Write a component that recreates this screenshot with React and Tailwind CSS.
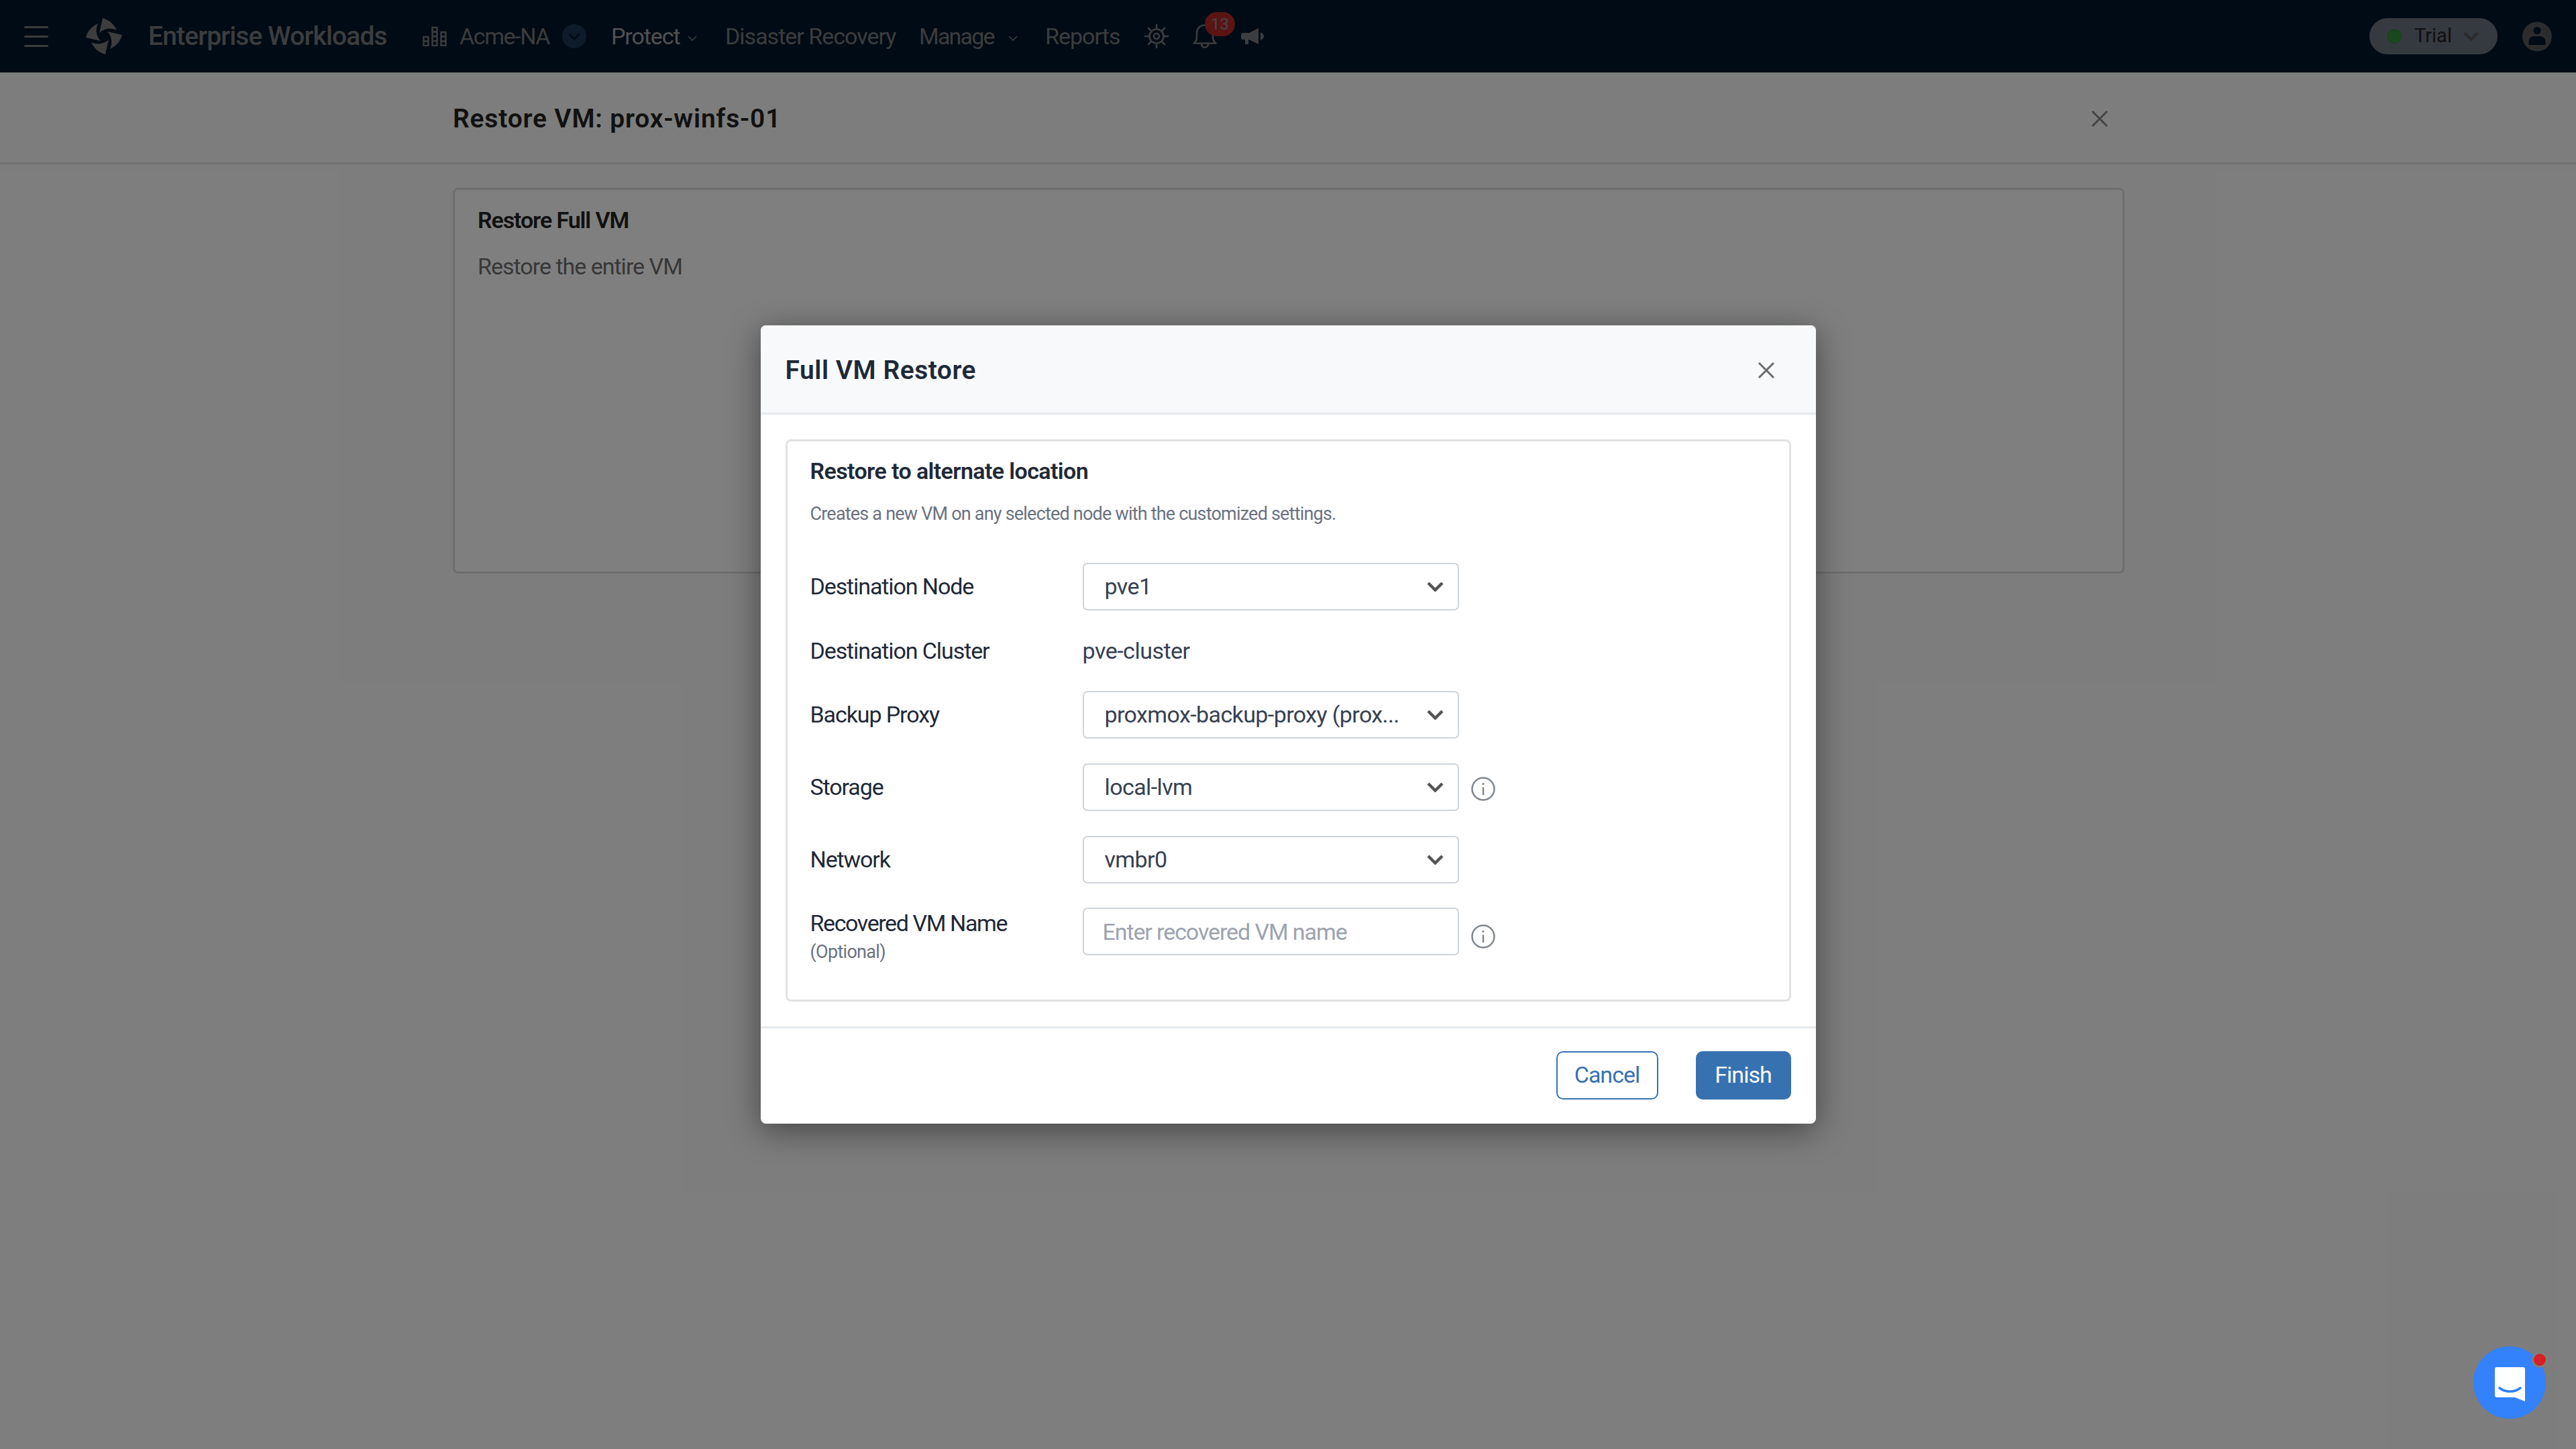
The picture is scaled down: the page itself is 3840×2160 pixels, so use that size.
import React from "react";

const font = "font-['Roboto','Liberation_Sans',sans-serif]";

function Caret({ className }) {
  return (
    <svg viewBox="0 0 25 15" className={className} fill="none" stroke="currentColor" strokeWidth="4.5">
      <path d="M2 2l10.5 10.5L23 2" />
    </svg>
  );
}

function SmallCaret({ className }) {
  return (
    <svg viewBox="0 0 14 8" className={className} fill="none" stroke="currentColor" strokeWidth="1.6">
      <path d="M1 1l6 6 6-6" />
    </svg>
  );
}

function Cross({ className }) {
  return (
    <svg viewBox="0 0 24 24" className={className} stroke="currentColor" strokeWidth="3">
      <path d="M1 1l22 22M23 1L1 23" />
    </svg>
  );
}

function Info({ className }) {
  return (
    <svg viewBox="0 0 36 36" className={`w-9 h-9 shrink-0 ml-[18px] text-[#7f878e] ${className}`} fill="none" stroke="currentColor" strokeWidth="2.5">
      <circle cx="18" cy="18" r="16.5" />
      <path d="M18 15.5V27" />
      <circle cx="18" cy="10.5" r="1.6" fill="currentColor" stroke="none" />
    </svg>
  );
}

function Logo() {
  const blade = "M25 0C34 2 42 9 46 18C38 14 27 15 20 22Z";
  return (
    <svg viewBox="0 0 54 54" className="w-[54px] h-[54px] text-[#777a7c]" fill="currentColor">
      <path d={blade} />
      <path d={blade} transform="rotate(90 27 27)" />
      <path d={blade} transform="rotate(180 27 27)" />
      <path d={blade} transform="rotate(270 27 27)" />
    </svg>
  );
}

function Building() {
  return (
    <svg viewBox="0 0 36 30" className="w-9 h-[30px] text-[#777a7c]" fill="none" stroke="currentColor" strokeWidth="2.4">
      <path d="M1.5 16h7v13h-7zM1.5 22.5h7M14.5 2h7v27h-7zM14.5 8.5h7M14.5 15h7M14.5 22h7M27.5 9h7v20h-7zM27.5 15.5h7M27.5 22.500h7" />
    </svg>
  );
}

function Gear() {
  return (
    <svg viewBox="0 0 36 36" className="w-9 h-9 text-[#777a7c]" fill="none" stroke="currentColor" strokeWidth="2.6">
      <circle cx="18" cy="18" r="10.5" />
      <circle cx="18" cy="18" r="4" />
      <path d="M18 1v6M18 29v6M1 18h6M29 18h6M6 6l4.200 4.200M25.800 25.800L30 30M30 6l-4.200 4.200M10.200 25.800L6 30" strokeLinecap="round" />
    </svg>
  );
}

function Bell() {
  return (
    <svg viewBox="0 0 36 36" className="w-9 h-9 text-[#777a7c]" fill="none" stroke="currentColor" strokeWidth="2.6">
      <path d="M1.500 28.500c3-2 4.500-5 4.500-9V13C6 6.500 11 1.500 18 1.500S30 6.500 30 13v6.500c0 4 1.500 7 4.500 9z" strokeLinejoin="round" />
      <path d="M13 29c0 4 2 5.500 5 5.500s5-1.500 5-5.500" />
    </svg>
  );
}

function Megaphone() {
  return (
    <svg viewBox="0 0 34 24" className="w-[34px] h-6 text-[#777a7c]" fill="currentColor">
      <path d="M3 7h9L26 0v24L12 17l-1 .500V23a1 1 0 0 1-1 1H7a1 1 0 0 1-1-1v-6H3a3 3 0 0 1-3-3v-4a3 3 0 0 1 3-3z" />
      <path d="M29 6c3 1.500 5 3.500 5 6s-2 4.500-5 6z" />
    </svg>
  );
}

function Avatar() {
  return (
    <svg viewBox="0 0 44 45" className="w-11 h-[45px]">
      <circle cx="22" cy="22.500" r="22" fill="#56595d" />
      <circle cx="22" cy="13.500" r="5.500" fill="#02162a" />
      <path d="M9.500 35v-5c0-5 4-8 8-8h9c4 0 8 3 8 8v5z" fill="#02162a" />
    </svg>
  );
}

function Nav() {
  return (
    <div className="h-[108px] bg-[#02162a] flex items-center shrink-0 text-[34px] tracking-[-1px] text-[#777a7c]">
      <div className="ml-9 w-9 flex flex-col gap-[11px]">
        <div className="h-[3px] rounded bg-[#777a7c]" />
        <div className="h-[3px] rounded bg-[#777a7c]" />
        <div className="h-[3px] rounded bg-[#777a7c]" />
      </div>
      <div className="ml-[56px]">
        <Logo />
      </div>
      <span className="ml-[39px] w-[354px] text-[39px] font-medium whitespace-nowrap tracking-[-0.85px]">Enterprise Workloads</span>
      <div className="ml-[55px]">
        <Building />
      </div>
      <span className="ml-[19px] w-[135px] whitespace-nowrap tracking-[-1.4px]">Acme-NA</span>
      <div className="ml-[18px] w-9 h-9 rounded-full bg-[#1b3654] flex items-center justify-center text-[#02162a]">
        <Caret className="w-[18px] h-[11px]" />
      </div>
      <span className="ml-[37px] w-[101px] text-[#a0a3a5] whitespace-nowrap tracking-[-1.1px]">Protect</span>
      <SmallCaret className="ml-[13px] mt-[6px] w-[14px] h-2 text-[#777a7c]" />
      <span className="ml-[42px] w-[252px] whitespace-nowrap">Disaster Recovery</span>
      <span className="ml-[37px] w-[110px] whitespace-nowrap tracking-[-1.8px]">Manage</span>
      <SmallCaret className="ml-[23px] mt-[6px] w-[14px] h-2 text-[#777a7c]" />
      <span className="ml-[41px] w-[110px] whitespace-nowrap">Reports</span>
      <div className="ml-[38px]">
        <Gear />
      </div>
      <div className="ml-9 relative">
        <Bell />
        <div className="absolute left-[18px] top-[-18px] w-[45px] h-9 rounded-full bg-[#b52828] flex items-center justify-center text-[24px] tracking-normal text-[#8a8a8a]">
          13
        </div>
      </div>
      <div className="ml-9">
        <Megaphone />
      </div>
      <div className="ml-auto w-[191px] h-[54px] rounded-full bg-[#6b7280] flex items-center">
        <div className="ml-[27px] w-[21px] h-[21px] rounded-full bg-[#34913a] border border-[#2a7a30]" />
        <span className="ml-[19px] w-[53px] text-[29px] tracking-normal text-[#1f1f1f]">Trial</span>
        <Caret className="ml-[20px] w-[23px] h-[14px] text-[#555]" />
      </div>
      <div className="ml-[37px] mr-9">
        <Avatar />
      </div>
    </div>
  );
}

function Page() {
  return (
    <div className="flex-1 flex flex-col bg-[#fbfbfb]">
      <div className="h-[137px] shrink-0 border-b-[3px] border-[#e6e6e6] flex items-center justify-between pl-[675px] pr-[698px] pt-[4px]">
        <h1 className="text-[39px] font-semibold tracking-[0.8px] text-[#222]">Restore VM: prox-winfs-01</h1>
        <Cross className="w-6 h-6 text-[#888]" />
      </div>
      <div className="mt-[35px] ml-[675px] w-[2492px] h-[575px] rounded-[8px] border-[3px] border-[#dddddd] bg-white pl-[34px] pt-[20px]">
        <div className="text-[34px] font-semibold tracking-[-1.1px] text-[#222]">Restore Full VM</div>
        <div className="mt-[18px] text-[34px] tracking-[-1px] text-[#6f6f6f]">Restore the entire VM</div>
      </div>
    </div>
  );
}

function Select({ value }) {
  return (
    <div className="w-[561px] h-[71px] shrink-0 rounded-[7px] border-[2.5px] border-[#ced4da] bg-white flex items-center pl-[31px] pr-[21px] text-[34px] tracking-[-0.6px] text-[#374151]">
      <span className="flex-1 whitespace-nowrap">{value}</span>
      <Caret className="w-[25px] h-[15px] text-[#555]" />
    </div>
  );
}

function Label({ children }) {
  return <div className="w-[406px] shrink-0 text-[34px] tracking-[-1.1px] text-[#1f2937]">{children}</div>;
}

function Modal() {
  return (
    <div className="w-[1573px] h-[1190px] rounded-[8px] bg-white shadow-[0_10px_50px_rgba(0,0,0,0.45)] flex flex-col overflow-hidden">
      <div className="h-[133px] shrink-0 bg-[#f8f9fb] border-b-[3px] border-[#e5e8ec] flex items-center justify-between pl-[37px] pr-[62px] pt-[4px]">
        <h2 className="text-[39px] font-semibold tracking-[0.5px] text-[#1f2937]">Full VM Restore</h2>
        <Cross className="w-6 h-6 text-[#6b6b6b]" />
      </div>
      <div className="mx-[37px] mt-[37px] h-[838px] rounded-[8px] border-[3px] border-[#e2e2e2] px-[34px] pt-[22px]">
        <div className="text-[34px] leading-[44px] font-semibold tracking-[-0.6px] text-[#1f2937]">Restore to alternate location</div>
        <div className="mt-[22px] text-[27px] leading-[40px] tracking-[-0.8px] text-[#6b7280]">Creates a new VM on any selected node with the customized settings.</div>
        <div className="mt-[53px] flex flex-col gap-[37px]">
          <div className="flex items-center">
            <Label>Destination Node</Label>
            <Select value="pve1" />
          </div>
          <div className="flex items-center h-[46px]">
            <Label>Destination Cluster</Label>
            <span className="text-[34px] tracking-[-0.5px] text-[#374151]">pve-cluster</span>
          </div>
          <div className="flex items-center">
            <Label>Backup Proxy</Label>
            <Select value="proxmox-backup-proxy (prox..." />
          </div>
          <div className="flex items-center">
            <Label>Storage</Label>
            <Select value="local-lvm" />
            <Info className="mt-[5px]" />
          </div>
          <div className="flex items-center">
            <Label>Network</Label>
            <Select value="vmbr0" />
          </div>
          <div className="flex items-start h-[71px] mt-[-1px]">
            <div className="w-[406px] shrink-0 flex flex-col mt-[1px]">
              <div className="text-[34px] leading-[44px] tracking-[-1.4px] text-[#1f2937]">Recovered VM Name</div>
              <div className="mt-[3px] text-[27px] leading-[36px] tracking-[-0.7px] text-[#6b7280]">(Optional)</div>
            </div>
            <input
              placeholder="Enter recovered VM name"
              className="w-[561px] h-[71px] shrink-0 rounded-[7px] border-[2.5px] border-[#ced4da] bg-white px-[28px] text-[34px] tracking-[-1.1px] text-[#374151] placeholder:text-[#9ca3af] outline-none"
            />
            <Info className="mt-[25px]" />
          </div>
        </div>
      </div>
      <div className="mt-[37px] flex-1 border-t-[3px] border-[#e5e8ec] flex items-center justify-end gap-[56px] px-[37px] pb-[3px]">
        <button className="w-[152px] h-[72px] rounded-[10px] border-[2.5px] border-[#3771b0] bg-white text-[34px] tracking-[-1px] text-[#3771b0]">Cancel</button>
        <button className="w-[142px] h-[72px] rounded-[10px] bg-[#3771b0] text-[34px] tracking-[-1px] text-white">Finish</button>
      </div>
    </div>
  );
}

function Chat() {
  return (
    <div className="absolute left-[3687px] top-[2007px] w-[108px] h-[108px] rounded-full bg-[#3381fb] flex items-center justify-center">
      <svg viewBox="0 0 45 51" className="w-[45px] h-[51px] mt-[4px]">
        <path d="M3 0h39a3 3 0 0 1 3 3v48l-15-6H3a3 3 0 0 1-3-3V3a3 3 0 0 1 3-3z" fill="#fff" />
        <path d="M7 31c9 7 22 7 31 0" fill="none" stroke="#3381fb" strokeWidth="3.500" strokeLinecap="round" />
      </svg>
      <div className="absolute right-[-3px] top-[8px] w-6 h-6 rounded-full bg-[#d91e25] border-[3px] border-[#7f7f7f]" />
    </div>
  );
}

export default function App() {
  return (
    <div className={`relative h-screen w-full overflow-hidden flex flex-col ${font}`}>
      <Nav />
      <Page />
      <div className="absolute inset-0 bg-black/50 flex items-center justify-center">
        <Modal />
      </div>
      <Chat />
    </div>
  );
}
